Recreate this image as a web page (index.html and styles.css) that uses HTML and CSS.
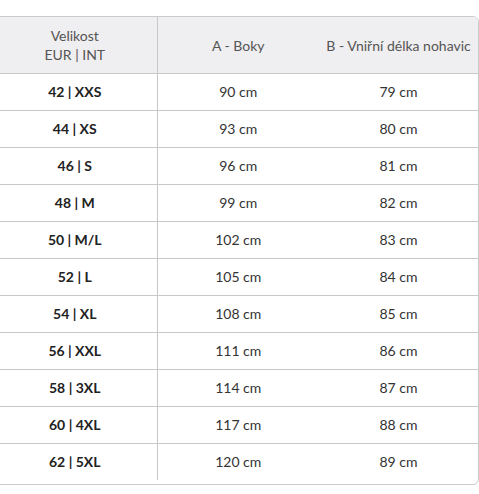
FILE: index.html
```html
<!DOCTYPE html>
<html lang="cs">
<head>
<meta charset="utf-8">
<title>Tabulka velikostí</title>
<link rel="stylesheet" href="styles.css">
</head>
<body>
<div class="wrap">
  <table class="sizes">
    <colgroup><col class="c1"><col class="c2"><col class="c3"></colgroup>
    <thead>
      <tr><th>Velikost<br>EUR | INT</th><th>A - Boky</th><th>B - Vniřní délka nohavic</th></tr>
    </thead>
    <tbody>
      <tr><td class="size">42 | XXS</td><td>90 cm</td><td>79 cm</td></tr>
      <tr><td class="size">44 | XS</td><td>93 cm</td><td>80 cm</td></tr>
      <tr><td class="size">46 | S</td><td>96 cm</td><td>81 cm</td></tr>
      <tr><td class="size">48 | M</td><td>99 cm</td><td>82 cm</td></tr>
      <tr><td class="size">50 | M/L</td><td>102 cm</td><td>83 cm</td></tr>
      <tr><td class="size">52 | L</td><td>105 cm</td><td>84 cm</td></tr>
      <tr><td class="size">54 | XL</td><td>108 cm</td><td>85 cm</td></tr>
      <tr><td class="size">56 | XXL</td><td>111 cm</td><td>86 cm</td></tr>
      <tr><td class="size">58 | 3XL</td><td>114 cm</td><td>87 cm</td></tr>
      <tr><td class="size">60 | 4XL</td><td>117 cm</td><td>88 cm</td></tr>
      <tr><td class="size">62 | 5XL</td><td>120 cm</td><td>89 cm</td></tr>
    </tbody>
  </table>
</div>
</body>
</html>
```
FILE: styles.css
```css
html, body {
  margin: 0;
  padding: 0;
  background: #fff;
}
body {
  font-family: Lato, "Open Sans", sans-serif;
  font-size: 14px;
  color: #333;
}
.wrap {
  box-sizing: border-box;
  width: 487px;
  margin: 16px 0 0 -8px;
  border: 1px solid #cbcbcb;
  border-radius: 6px;
  padding-bottom: 4px;
  overflow: hidden;
}
.sizes {
  width: 485px;
  border-collapse: collapse;
  table-layout: fixed;
}
.c1 { width: 164px; }
.c2 { width: 162px; }
.c3 { width: 159px; }
.sizes th {
  background: #efeef0;
  color: #555;
  font-weight: 400;
  line-height: 19px;
  height: 38px;
  padding: 9px 0;
  text-align: center;
  border-bottom: 1px solid #c8c8c8;
}
.sizes th:first-child,
.sizes td:first-child {
  border-right: 1px solid #c8c8c8;
}
.sizes td {
  height: 36px;
  padding: 0;
  text-align: center;
  line-height: 18px;
  border-bottom: 1px solid #c8c8c8;
}
.sizes tbody tr:last-child td {
  border-bottom: none;
}
.sizes td.size {
  font-weight: 700;
  color: #222;
}
```
